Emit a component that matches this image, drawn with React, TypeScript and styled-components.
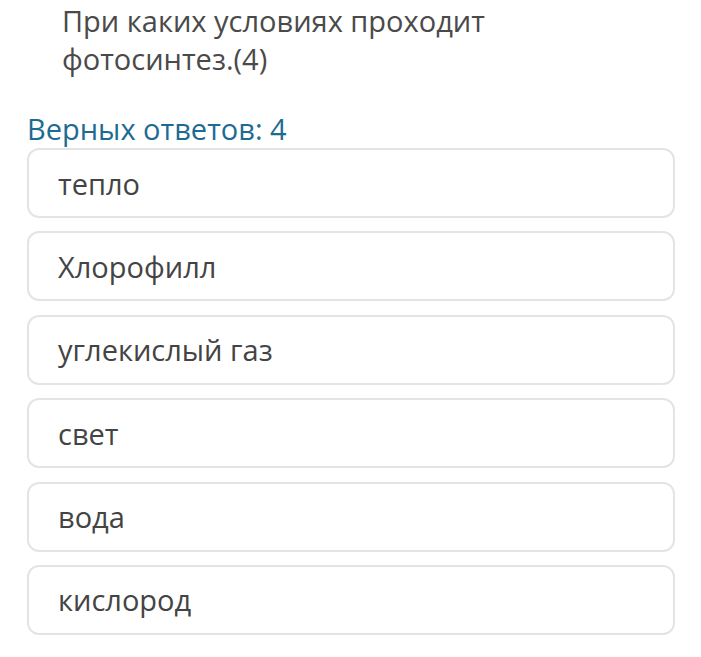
import styled, { createGlobalStyle } from 'styled-components';

const GlobalStyle = createGlobalStyle`
  html, body {
    margin: 0;
    padding: 0;
    background: #ffffff;
  }
  body {
    font-family: "Open Sans", "Noto Sans", sans-serif;
  }
`;

const options = ['тепло', 'Хлорофилл', 'углекислый газ', 'свет', 'вода', 'кислород'];

const App = () => {
  return <Page>
    <GlobalStyle />
    <Question>При каких условиях проходит фотосинтез.(4)</Question>
    <Counter>Верных ответов: 4</Counter>
    <OptionList>
      {options.map((value) => <Option key={value}>{value}</Option>)}
    </OptionList>
  </Page>;
};

export default App;

const Page = styled.div`
  width: 701px;
  height: 657px;
  box-sizing: border-box;
  padding: 2px 26px 0px 27px;
  overflow: hidden;
`;

const Question = styled.div`
  margin-left: 35px;
  width: 460px;
  font-size: 29px;
  line-height: 38px;
  color: #4a4a4a;
`;

const Counter = styled.div`
  margin-top: 32px;
  font-size: 29px;
  line-height: 38px;
  color: #1d6b93;
`;

const OptionList = styled.ul`
  margin: 0px;
  padding: 0px;
  list-style-type: none;

  display: flex;
  flex-direction: column;
  gap: 13.4px;
`;

const Option = styled.li`
  height: 70px;
  box-sizing: border-box;
  padding: 0px 29px;

  display: flex;
  align-items: center;

  border: 2px solid #e4e4e4;
  border-radius: 12px;

  font-size: 29px;
  color: #444444;
`;
